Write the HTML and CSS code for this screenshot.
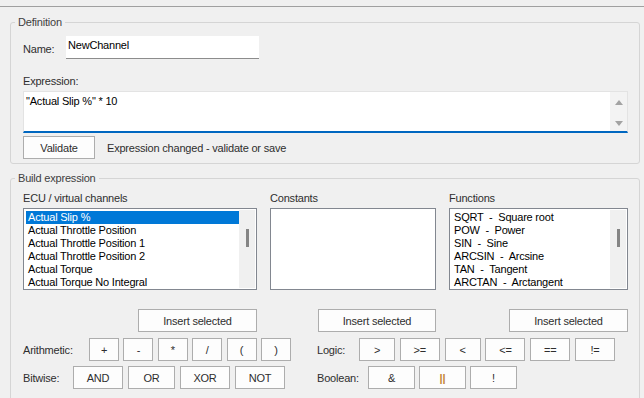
FILE: index.html
```html
<!DOCTYPE html>
<html lang="en">
<head>
    <meta charset="UTF-8">
    <meta name="viewport" content="width=device-width, initial-scale=1.0">
    <title>Virtual channel</title>
    <link rel="stylesheet" href="styles.css">
</head>
<body>
    <div class="topbar"></div>

    <fieldset class="group definition">
        <legend>Definition</legend>
        <div class="name-row">
            <label for="name">Name:</label>
            <input type="text" id="name" value="NewChannel">
        </div>
        <div class="field-label expr-label">Expression:</div>
        <div class="expression">
            <div class="expression-text">"Actual Slip %" * 10</div>
            <div class="spin">
                <span class="arrow up"></span>
                <span class="arrow down"></span>
            </div>
        </div>
        <div class="validate-row">
            <button class="btn validate">Validate</button>
            <span class="status">Expression changed - validate or save</span>
        </div>
    </fieldset>

    <fieldset class="group build">
        <legend>Build expression</legend>
        <div class="lists">
            <div class="list-col">
                <div class="field-label">ECU / virtual channels</div>
                <div class="listbox">
                    <ul>
                        <li class="selected">Actual Slip %</li>
                        <li>Actual Throttle Position</li>
                        <li>Actual Throttle Position 1</li>
                        <li>Actual Throttle Position 2</li>
                        <li>Actual Torque</li>
                        <li>Actual Torque No Integral</li>
                    </ul>
                    <div class="scroll"><span class="thumb"></span></div>
                </div>
                <button class="btn insert">Insert selected</button>
            </div>
            <div class="list-col">
                <div class="field-label">Constants</div>
                <div class="listbox">
                    <ul></ul>
                </div>
                <button class="btn insert narrow">Insert selected</button>
            </div>
            <div class="list-col">
                <div class="field-label">Functions</div>
                <div class="listbox">
                    <ul class="functions">
                        <li>SQRT  -  Square root</li>
                        <li>POW  -  Power</li>
                        <li>SIN  -  Sine</li>
                        <li>ARCSIN  -  Arcsine</li>
                        <li>TAN  -  Tangent</li>
                        <li>ARCTAN  -  Arctangent</li>
                    </ul>
                    <div class="scroll"><span class="thumb"></span></div>
                </div>
                <button class="btn insert">Insert selected</button>
            </div>
        </div>

        <div class="ops">
            <div class="op-row">
                <span class="op-label arith">Arithmetic:</span>
                <div class="op-buttons arith">
                    <button class="btn op">+</button>
                    <button class="btn op">-</button>
                    <button class="btn op">*</button>
                    <button class="btn op">/</button>
                    <button class="btn op">(</button>
                    <button class="btn op">)</button>
                </div>
            </div>
            <div class="op-row">
                <span class="op-label logic">Logic:</span>
                <div class="op-buttons logic">
                    <button class="btn op w36">&gt;</button>
                    <button class="btn op w40">&gt;=</button>
                    <button class="btn op w36">&lt;</button>
                    <button class="btn op w40">&lt;=</button>
                    <button class="btn op w40">==</button>
                    <button class="btn op w40">!=</button>
                </div>
            </div>
            <div class="op-row">
                <span class="op-label bitwise">Bitwise:</span>
                <div class="op-buttons bitwise">
                    <button class="btn op w50">AND</button>
                    <button class="btn op w47">OR</button>
                    <button class="btn op w50">XOR</button>
                    <button class="btn op w50">NOT</button>
                </div>
            </div>
            <div class="op-row">
                <span class="op-label boolean">Boolean:</span>
                <div class="op-buttons boolean">
                    <button class="btn op w47">&amp;</button>
                    <button class="btn op w47 pipes">||</button>
                    <button class="btn op w47">!</button>
                </div>
            </div>
        </div>
    </fieldset>
</body>
</html>
```

FILE: styles.css
```css
body {
    margin: 0;
    background-color: #f0f0f0;
    font-family: "Liberation Sans", Arial, sans-serif;
    font-size: 11px;
    letter-spacing: -0.2px;
    color: #2e2e2e;
    overflow: hidden;
}
.topbar {
    height: 6px;
    border-bottom: 1px solid #a0a0a0;
}

/* group boxes */
.group {
    margin: 8px 4px 0 10px;
    padding: 0 11px 4px 12px;
    border: 1px solid #d5d5d5;
    border-radius: 3px;
    min-width: 0;
}
.group legend {
    margin-left: -8px;
    padding: 0 3px;
    line-height: 14px;
    color: #404040;
}
.build {
    margin-top: 7px;
    padding-bottom: 12px;
}
.field-label {
    line-height: 14px;
}

/* definition */
.name-row {
    display: flex;
    margin-top: 7px;
}
.name-row label {
    width: 43px;
    padding-top: 6px;
    line-height: 14px;
}
.name-row input {
    width: 193px;
    height: 23px;
    box-sizing: border-box;
    margin: 0;
    padding: 2px 2px 6px;
    border: none;
    border-bottom: 1px solid #8c8c8c;
    background-color: white;
    font: inherit;
    letter-spacing: inherit;
    color: #000;
    line-height: 14px;
    outline: none;
}
.expr-label {
    margin-top: 15px;
}
.expression {
    display: flex;
    height: 42px;
    box-sizing: border-box;
    margin-top: 3px;
    border: 1px solid #e3e3e3;
    border-bottom: 2px solid #0067c0;
    background-color: white;
}
.expression-text {
    flex: 1;
    padding: 2px 2px 0;
    line-height: 14px;
    color: #000;
}
.spin {
    width: 17px;
    display: flex;
    flex-direction: column;
    justify-content: space-between;
    align-items: center;
    padding: 8px 0 5px;
    box-sizing: border-box;
    background-color: #f3f3f3;
}
.arrow {
    width: 0;
    height: 0;
    border-left: 4px solid transparent;
    border-right: 4px solid transparent;
}
.arrow.up {
    border-bottom: 5px solid #a3a3a3;
}
.arrow.down {
    border-top: 5px solid #a3a3a3;
}
.validate-row {
    display: flex;
    align-items: center;
    margin-top: 3px;
}
.status {
    margin-left: 12px;
}

/* buttons */
.btn {
    height: 23px;
    box-sizing: border-box;
    margin: 0;
    padding: 0;
    border: 1px solid #adadad;
    background-color: #fdfdfd;
    font: inherit;
    letter-spacing: inherit;
    color: #2e2e2e;
    line-height: 14px;
}
.validate {
    width: 72px;
}
.insert {
    width: 119px;
    margin-top: 19px;
    align-self: flex-end;
}
.insert.narrow {
    width: 118px;
}

/* list boxes */
.lists {
    display: grid;
    grid-template-columns: 234px 166px 179px;
    column-gap: 13px;
    margin-top: 6px;
}
.list-col {
    display: flex;
    flex-direction: column;
}
.listbox {
    display: flex;
    height: 82px;
    box-sizing: border-box;
    margin-top: 3px;
    padding: 1px;
    border: 1px solid #828790;
    background-color: white;
}
.listbox ul {
    flex: 1;
    margin: 0;
    padding: 1px 0 0 1px;
    list-style: none;
    overflow: hidden;
}
.listbox li {
    height: 13px;
    line-height: 13px;
    padding-left: 2px;
    color: #000;
    white-space: nowrap;
}
.listbox li.selected {
    background-color: #0078d7;
    color: white;
}
.functions li {
    white-space: pre;
}
.scroll {
    width: 16px;
    background-color: #f0f0f0;
    display: flex;
    justify-content: center;
}
.thumb {
    width: 3px;
    height: 18px;
    margin-top: 19px;
    background-color: #858585;
}

/* operator rows */
.ops {
    display: grid;
    grid-template-columns: 294px 1fr;
    row-gap: 5px;
    margin-top: 6px;
}
.op-row {
    display: flex;
    align-items: center;
}
.op-label.arith { width: 66px; }
.op-label.logic { width: 42px; }
.op-label.bitwise { width: 50px; }
.op-label.boolean { width: 51px; }
.op-buttons {
    display: flex;
}
.op-buttons.arith { gap: 4.4px; }
.op-buttons.logic { gap: 4.8px; }
.op-buttons.bitwise { gap: 5px; }
.op-buttons.boolean { gap: 4px; }
.op { width: 30px; }
.op.w36 { width: 36px; }
.op.w40 { width: 40px; }
.op.w47 { width: 47px; }
.op.w50 { width: 50px; }
.pipes {
    color: #c48534;
    font-weight: bold;
}
```
